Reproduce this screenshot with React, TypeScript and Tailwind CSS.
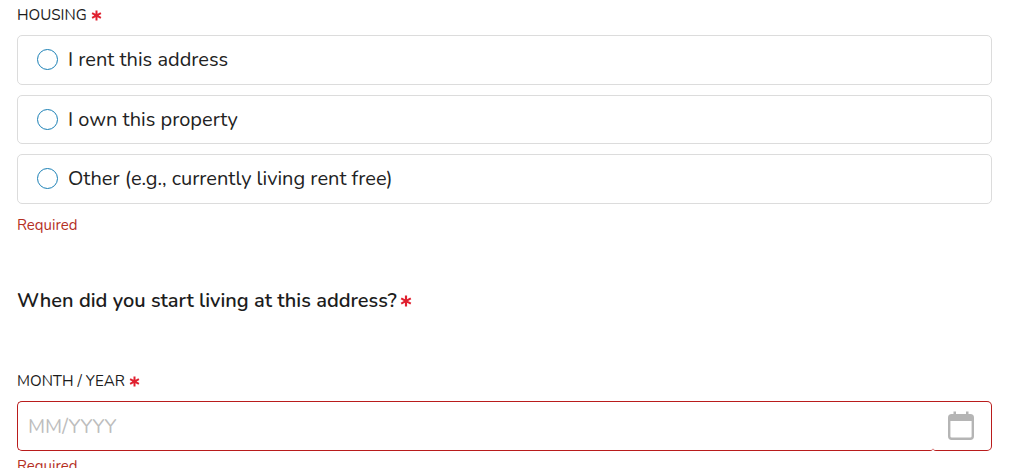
const Star = ({ size = 11 }: { size?: number }) => (
  <svg width={size} height={size} viewBox="0 0 10 10" className="inline-block shrink-0" aria-hidden="true">
    <path d="M5 0.5V9.5M1 2.8L9 7.2M9 2.8L1 7.2" stroke="#e0202f" strokeWidth="1.8" />
  </svg>
);

function RadioCard({ label }: { label: string }) {
  return (
    <label className="flex h-[49.6px] items-center rounded-[5px] border border-[#dcdcdc] bg-white pl-[19px]">
      <span className="h-[21px] w-[21px] rounded-full border-[1.5px] border-[#1a7fb5]" />
      <span className="ml-[10px] pt-[0.4px] text-[20px] text-[#222]">{label}</span>
    </label>
  );
}

export default function App() {
  return (
    <div className="h-[468px] overflow-hidden bg-white px-[17px] font-['Nunito','Lato','Noto_Sans',sans-serif] text-[#1c1c1c]">
      <div className="w-[975px]">
        <div className="flex h-[35px] items-center gap-[4px] pb-[5px] text-[15.2px]">
          HOUSING <Star />
        </div>
        <div className="flex flex-col gap-[10px]">
          <RadioCard label="I rent this address" />
          <RadioCard label="I own this property" />
          <RadioCard label="Other (e.g., currently living rent free)" />
        </div>
        <p className="mt-[12px] text-[15px] leading-[18px] text-[#b5301f]">Required</p>

        <div className="mt-[53px] flex items-center gap-[3px] text-[20px] leading-[28px] font-semibold">
          When did you start living at this address? <Star size={12} />
        </div>

        <div className="mt-[57px] flex h-[20px] items-center gap-[4px] text-[15.2px]">
          MONTH / YEAR <Star />
        </div>
        <div className="mt-[9px] flex h-[50px]">
          <div className="flex flex-1 items-center rounded-l-[5px] rounded-br-[3px] border border-r-0 border-[#b91c1c] pt-[2px] pl-[10px] text-[20px] text-[#bdbdbd]">
            MM/YYYY
          </div>
          <div className="flex w-[59px] items-center rounded-r-[5px] rounded-bl-[3px] border border-l-0 border-[#b91c1c] pl-[15px]">
            <svg width="26" height="29" viewBox="0 0 26 29" aria-hidden="true">
              <path d="M5.5 0.5h2.5v5H5.5zM18 0.5h2.5v5H18z" fill="#b5b5b5" />
              <rect x="1.2" y="4.2" width="23.6" height="23.6" rx="2.5" fill="#fff" stroke="#b5b5b5" strokeWidth="2.4" />
              <path d="M1 6.5a2.5 2.5 0 0 1 2.5-2.5h19a2.5 2.5 0 0 1 2.5 2.5V10H1z" fill="#b5b5b5" />
            </svg>
          </div>
        </div>
        <p className="mt-[6px] text-[15px] leading-[18px] text-[#b5301f]">Required</p>
      </div>
    </div>
  );
}
